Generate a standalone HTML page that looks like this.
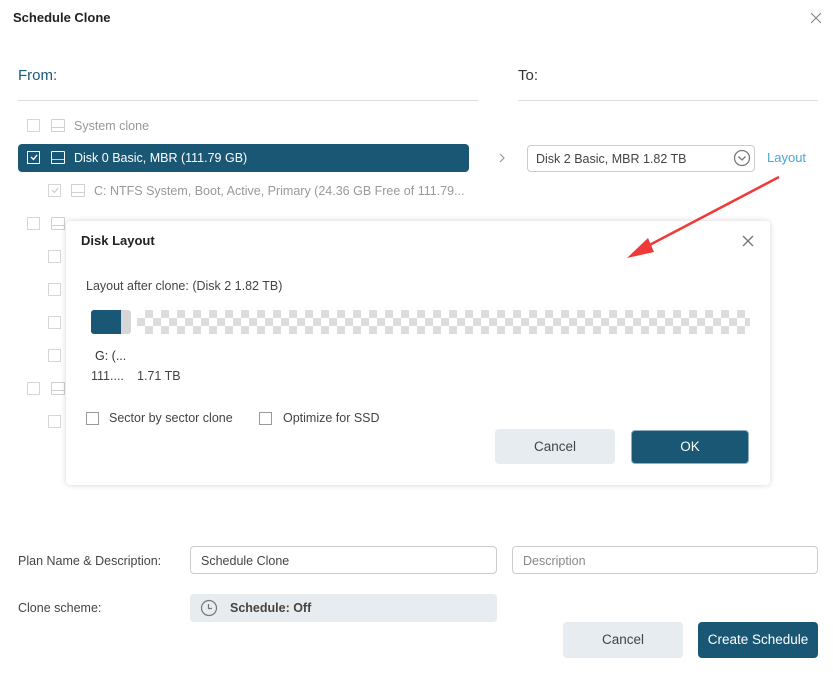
<!DOCTYPE html>
<html><head><meta charset="utf-8"><style>
*{margin:0;padding:0;box-sizing:border-box}
body{width:833px;height:678px;background:#fff;position:relative;overflow:hidden;font-family:"Liberation Sans",sans-serif;font-size:12.5px;color:#333}
.a{position:absolute;white-space:nowrap}
.t{line-height:16px;transform:translateY(-8px)}
.cb{position:absolute;width:13px;height:13px;border:1.5px solid #d6d6d6;background:#fff}
.hd{position:absolute;width:14px;height:13px;border:1.5px solid #d0d0d0;border-radius:1px}
.hd:after{content:"";position:absolute;left:0;right:0;bottom:3px;border-top:1.5px solid #d0d0d0}
.btn{position:absolute;border-radius:4px;text-align:center;font-size:13.5px}
</style></head><body>
<div class="a t" style="left:13px;top:18px;font-weight:bold;font-size:13px;color:#222">Schedule Clone</div>
<svg class="a" style="left:810px;top:12px" width="12" height="12"><path d="M1 1L11 11M11 1L1 11" stroke="#888" stroke-width="1.2"/></svg>
<div class="a t" style="left:18px;top:76px;font-size:15px;color:#1a5a7a">From:</div>
<div class="a t" style="left:518px;top:76px;font-size:15px;color:#333">To:</div>
<div class="a" style="left:18px;top:100px;width:460px;border-top:1px solid #ddd"></div>
<div class="a" style="left:518px;top:100px;width:300px;border-top:1px solid #ddd"></div>

<div class="cb" style="left:27px;top:119px"></div><div class="hd" style="left:51px;top:119px"></div>
<div class="a t" style="left:74px;top:126px;color:#999">System clone</div>

<div class="a" style="left:18px;top:144px;width:451px;height:28px;background:#1a5774;border-radius:4px"></div>
<div class="cb" style="left:27px;top:151px;border-color:#fff;background:none"></div>
<svg class="a" style="left:30px;top:154px" width="8" height="7"><path d="M1 3L3.5 5.5L7 1" stroke="#fff" stroke-width="1.4" fill="none"/></svg>
<div class="hd" style="left:51px;top:151px;border-color:#fff"></div><style>.w:after{border-color:#fff!important}</style>
<div class="a t" style="left:74px;top:158px;color:#fff">Disk 0 Basic, MBR (111.79 GB)</div>

<div class="cb" style="left:48px;top:184px"></div>
<svg class="a" style="left:51px;top:187px" width="8" height="7"><path d="M1 3L3.5 5.5L7 1" stroke="#ccc" stroke-width="1.2" fill="none"/></svg>
<div class="hd" style="left:71px;top:184px"></div>
<div class="a t" style="left:94px;top:191px;color:#999">C: NTFS System, Boot, Active, Primary (24.36 GB Free of 111.79...</div>

<div class="cb" style="left:27px;top:217px"></div><div class="hd" style="left:51px;top:217px"></div>
<div class="cb" style="left:48px;top:250px"></div>
<div class="cb" style="left:48px;top:283px"></div>
<div class="cb" style="left:48px;top:316px"></div>
<div class="cb" style="left:48px;top:349px"></div>
<div class="cb" style="left:27px;top:382px"></div><div class="hd" style="left:51px;top:382px"></div>
<div class="cb" style="left:48px;top:415px"></div>

<svg class="a" style="left:498px;top:153px" width="8" height="10"><path d="M2 1L6 5L2 9" stroke="#999" stroke-width="1.2" fill="none"/></svg>
<div class="a" style="left:527px;top:145px;width:228px;height:27px;border:1px solid #ccc;border-radius:4px"></div>
<div class="a t" style="left:536px;top:159px;color:#444">Disk 2 Basic, MBR 1.82 TB</div>
<svg class="a" style="left:733px;top:149px" width="18" height="18"><circle cx="9" cy="9" r="7.5" stroke="#777" stroke-width="1.3" fill="none"/><path d="M5.5 7.5L9 11L12.5 7.5" stroke="#777" stroke-width="1.3" fill="none"/></svg>
<div class="a t" style="left:767px;top:158px;color:#4aa8d8;font-size:13px">Layout</div>

<div class="a" style="left:66px;top:221px;width:704px;height:264px;background:#fff;border-radius:4px;box-shadow:0 0 6px rgba(0,0,0,.18)"></div>
<div class="a t" style="left:81px;top:241px;font-weight:bold;font-size:13px;color:#222">Disk Layout</div>
<svg class="a" style="left:742px;top:235px" width="12" height="12"><path d="M1 1L11 11M11 1L1 11" stroke="#777" stroke-width="1.4"/></svg>
<div class="a t" style="left:86px;top:286px;color:#444">Layout after clone: (Disk 2 1.82 TB)</div>
<div class="a" style="left:91px;top:310px;width:40px;height:24px;background:#d6d6d6;border-radius:3px"></div>
<div class="a" style="left:91px;top:310px;width:30px;height:24px;background:#1a5774;border-radius:3px 0 0 3px"></div>
<div class="a" style="left:137px;top:310px;width:613px;height:24px;background-color:#fff;background-image:linear-gradient(45deg,#dcdcdc 25%,transparent 25%,transparent 75%,#dcdcdc 75%),linear-gradient(45deg,#dcdcdc 25%,transparent 25%,transparent 75%,#dcdcdc 75%);background-size:16px 16px;background-position:0 0,8px 8px"></div>
<div class="a" style="left:137px;top:310px;width:613px;height:24px;background-image:linear-gradient(#dcdcdc 0 0);background-size:0 0"></div>
<div class="a t" style="left:95px;top:356px;color:#333">G: (...</div>
<div class="a t" style="left:91px;top:376px;color:#444">111....</div>
<div class="a t" style="left:137px;top:376px;color:#444">1.71 TB</div>
<div class="cb" style="left:86px;top:412px;border-color:#999"></div>
<div class="a t" style="left:109px;top:418px;color:#444">Sector by sector clone</div>
<div class="cb" style="left:259px;top:412px;border-color:#999"></div>
<div class="a t" style="left:283px;top:418px;color:#444">Optimize for SSD</div>
<div class="btn" style="left:495px;top:429px;width:120px;height:35px;line-height:35px;background:#e6ecef;color:#444">Cancel</div>
<div class="btn" style="left:631px;top:430px;width:118px;height:34px;line-height:32px;background:#1a5774;color:#fff;border:1.5px solid #8fb0c0">OK</div>

<svg class="a" style="left:0;top:0" width="833" height="678"><path d="M779 177L640 250" stroke="#f03a3a" stroke-width="2.5"/><path d="M627 258L648 238L654 252Z" fill="#f03a3a"/></svg>

<div class="a t" style="left:18px;top:561px;color:#444">Plan Name &amp; Description:</div>
<div class="a" style="left:190px;top:546px;width:307px;height:28px;border:1px solid #ccc;border-radius:4px"></div>
<div class="a t" style="left:201px;top:561px;color:#444">Schedule Clone</div>
<div class="a" style="left:512px;top:546px;width:306px;height:28px;border:1px solid #ccc;border-radius:4px"></div>
<div class="a t" style="left:523px;top:561px;color:#888">Description</div>
<div class="a t" style="left:18px;top:608px;color:#444">Clone scheme:</div>
<div class="a" style="left:190px;top:594px;width:307px;height:28px;background:#e6ecef;border-radius:4px"></div>
<svg class="a" style="left:200px;top:599px" width="18" height="18"><circle cx="9" cy="9" r="7.5" stroke="#777" stroke-width="1.2" fill="none"/><path d="M8.5 5V9.5H12" stroke="#777" stroke-width="1.2" fill="none"/></svg>
<div class="a t" style="left:230px;top:608px;font-weight:bold;color:#444">Schedule: Off</div>
<div class="btn" style="left:563px;top:622px;width:120px;height:36px;line-height:36px;background:#e6ecef;color:#444">Cancel</div>
<div class="btn" style="left:698px;top:622px;width:120px;height:36px;line-height:36px;background:#1a5774;color:#fff">Create Schedule</div>
</body></html>
